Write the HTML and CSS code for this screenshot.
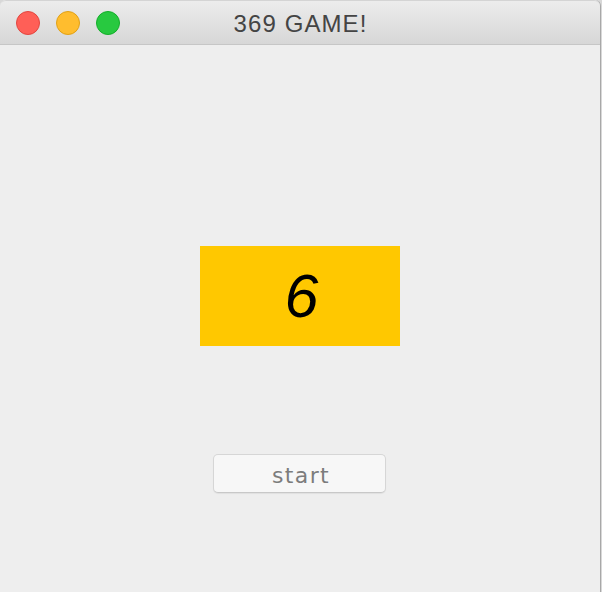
FILE: index.html
```html
<!DOCTYPE html>
<html>
<head>
<meta charset="utf-8">
<link rel="stylesheet" href="styles.css">
</head>
<body>
<div class="window">
  <div class="titlebar">
    <div class="lights">
      <span class="light red"></span>
      <span class="light yellow"></span>
      <span class="light green"></span>
    </div>
    <div class="title">369 GAME!</div>
  </div>
  <div class="content">
    <div class="number">6</div>
    <button class="start">start</button>
  </div>
</div>
</body>
</html>
```
FILE: styles.css
```css
html, body {
  margin: 0;
  padding: 0;
  width: 602px;
  height: 592px;
  overflow: hidden;
  background: #d8d8d8;
}
.window {
  width: 600px;
  height: 592px;
  border-right: 1px solid #a8a8a8;
  background: #eeeeee;
  display: flex;
  flex-direction: column;
  border-top-left-radius: 6px;
  border-top-right-radius: 6px;
  overflow: hidden;
}
.titlebar {
  flex: none;
  display: grid;
  align-items: center;
  background: linear-gradient(#ececec, #d7d7d7);
  border-bottom: 1px solid #c6c6c6;
  border-top: 1px solid #d4d4d4;
  box-sizing: content-box;
  height: 43px;
  border-top-left-radius: 6px;
  border-top-right-radius: 6px;
}
.lights, .title {
  grid-area: 1 / 1;
}
.lights {
  justify-self: start;
  display: flex;
  gap: 16px;
  padding-left: 16px;
}
.light {
  width: 22px;
  height: 22px;
  border-radius: 50%;
  border: 1px solid;
  display: block;
}
.red { background: #ff5f57; border-color: #e2463f; }
.yellow { background: #ffbd2e; border-color: #e1a116; }
.green { background: #28c940; border-color: #14ae2a; }
.title {
  justify-self: center;
  font-family: "Liberation Sans", Arial, sans-serif;
  font-size: 24px;
  letter-spacing: 1.1px;
  color: #444444;
  padding-left: 1px;
  padding-top: 3px;
}
.content {
  flex: 1;
  display: flex;
  flex-direction: column;
  align-items: center;
  padding-top: 201px;
}
.number {
  width: 200px;
  height: 100px;
  background: #ffc800;
  display: flex;
  align-items: center;
  justify-content: center;
  font-family: "Liberation Sans", Arial, sans-serif;
  font-style: italic;
  font-size: 61px;
  color: #000;
  padding-left: 3px;
  box-sizing: border-box;
}
.start {
  margin-top: 108px;
  width: 173px;
  height: 39px;
  background: #f7f7f7;
  border: 1px solid #d6d6d6;
  border-bottom-color: #c8c8c8;
  border-radius: 5px;
  box-shadow: 0 1px 1px rgba(0,0,0,0.06);
  font-family: "DejaVu Sans", Verdana, sans-serif;
  font-size: 22px;
  letter-spacing: 1.4px;
  color: #7c7c7c;
  padding: 3px 0 0 3px;
  margin-left: -1px;
}
```
